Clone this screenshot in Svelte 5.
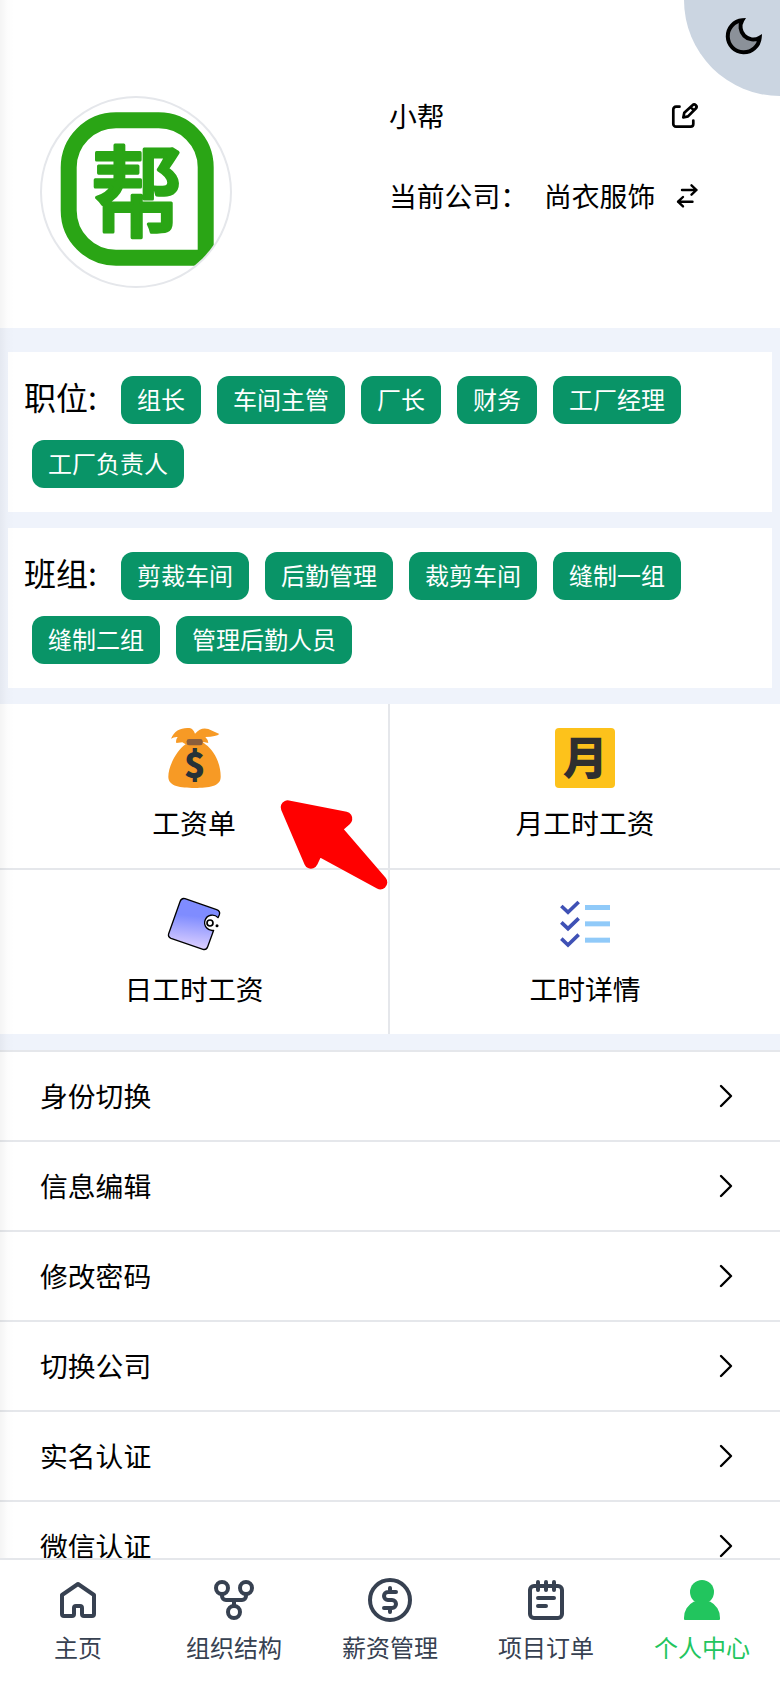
<script>
	const tagGroups = [
		{ label: '职位:', tags: ['组长', '车间主管', '厂长', '财务', '工厂经理', '工厂负责人'] },
		{ label: '班组:', tags: ['剪裁车间', '后勤管理', '裁剪车间', '缝制一组', '缝制二组', '管理后勤人员'] }
	];

	const shortcuts = [
		{ icon: 'bag', label: '工资单' },
		{ icon: 'month', label: '月工时工资' },
		{ icon: 'wallet', label: '日工时工资' },
		{ icon: 'checks', label: '工时详情' }
	];

	const menu = ['身份切换', '信息编辑', '修改密码', '切换公司', '实名认证', '微信认证'];

	const tabs = [
		{ icon: 'home', label: '主页' },
		{ icon: 'fork', label: '组织结构' },
		{ icon: 'dollar', label: '薪资管理' },
		{ icon: 'note', label: '项目订单' },
		{ icon: 'user', label: '个人中心' }
	];

	let active = $state('user');
</script>

<div class="app">
	<main>
		<header>
			<div class="avatar">
				<svg viewBox="0 0 192 192">
					<path
						d="M76 24.300h42.700a47 47 0 0 1 47 47V157q0 4.700-4.700 4.700h5.500l-1 0H76a47.300 47.300 0 0 1-47.300-47.300V71.600A47.300 47.300 0 0 1 76 24.300z"
						fill="none" stroke="#2aa515" stroke-width="16" />
					<text class="logo-text" transform="translate(97 132.500) scale(1 1.070)" text-anchor="middle">帮</text>
				</svg>
			</div>
			<div class="info">
				<div class="line">
					<span>小帮</span>
					<svg class="edit" viewBox="0 0 30 30" width="30" height="30">
						<path d="M9.500 5.700H6a2.700 2.700 0 0 0-2.700 2.700V23A2.700 2.700 0 0 0 6 25.700h14.600a2.700 2.700 0 0 0 2.700-2.700v-3.500" />
						<path d="M13.300 16.500l1-4.700 8.200-7.600a2.300 2.300 0 0 1 3.300 3.300l-7.800 7.900zM20.600 6l3.400 3.400" />
					</svg>
				</div>
				<div class="line">
					<span>当前公司：</span>
					<span class="company">尚衣服饰</span>
					<svg class="swap" viewBox="0 0 24 26" width="24" height="26">
						<path d="M7 7h14.500M16.500 2.300l5 4.700-5 4.700M17.500 18.700H3M8 14L3 18.700l5 4.700" />
					</svg>
				</div>
			</div>
			<button class="theme" aria-label="theme">
				<svg viewBox="0 0 36 36" width="36" height="36">
					<path d="M16.300 2.300A16 16 0 1 0 33.700 19.700A12.700 12.700 0 0 1 16.300 2.300z" />
				</svg>
			</button>
		</header>

		<section class="groups">
			{#each tagGroups as group}
				<div class="group">
					<span class="group-label">{group.label}</span>
					{#each group.tags as tag}
						<span class="tag">{tag}</span>
					{/each}
				</div>
			{/each}
		</section>

		<section class="grid">
			{#each shortcuts as item}
				<div class="cell">
					{#if item.icon === 'bag'}
						<svg viewBox="132 84 180 180" width="60" height="60">
							<path fill="#f79a25" d="M153 116C163 92 183 82 208 84q12 2 17 17 18-21 40-14l33 15q-8 8-42 9 7 6 9 18l-18-4 9 8c31 22 47 65 46 99-1 28-35 32-78 32s-77-4-79-32c-1-32 25-81 52-99l-10-6-18 2q-3-9 4-18-11-1-20 5z" />
							<rect x="200" y="117" width="48" height="19" rx="7" fill="#8b5e3c" />
							<text class="bag-text" x="224" y="235" text-anchor="middle">$</text>
						</svg>
					{:else if item.icon === 'month'}
						<svg viewBox="0 0 60 60" width="60" height="60">
							<rect width="60" height="60" rx="4" fill="#fdc21b" />
							<text class="month-text" x="30.200" y="46.800" text-anchor="middle">月</text>
						</svg>
					{:else if item.icon === 'wallet'}
						<svg viewBox="192 72 180 180" width="60" height="60">
							<defs>
								<linearGradient id="wallet" x1="0.600" y1="0" x2="0.500" y2="1">
									<stop offset="0.350" stop-color="#7f8cff" />
									<stop offset="1" stop-color="#e0d2ff" />
								</linearGradient>
							</defs>
							<path
								d="M255 86L350 119Q362 124 358 134L354 143A23 23 0 1 0 341 181L323 230Q319 241 309 238L213 205Q203 201 206 191L240 95Q244 83 255 86Z"
								fill="url(#wallet)" stroke="#000" stroke-width="4" stroke-linejoin="round" />
							<circle cx="330" cy="159" r="9" fill="#fff" stroke="#000" stroke-width="5" />
							<circle cx="351" cy="167" r="4.500" />
						</svg>
					{:else}
						<svg viewBox="225 582 180 180" width="60" height="60">
							{#each [0, 49, 98] as dy}
								<path d="M244 {618 + dy}l20 19 32-31" fill="none" stroke="#3f51b5" stroke-width="11" />
								<path d="M315 {622.5 + dy}h75" stroke="#90caf9" stroke-width="15" />
							{/each}
						</svg>
					{/if}
					<span>{item.label}</span>
				</div>
			{/each}
		</section>

		<ul class="menu">
			{#each menu as item}
				<li>
					<span>{item}</span>
					<svg viewBox="0 0 16 24" width="16" height="24">
						<path d="M3 2l10 10L3 22" />
					</svg>
				</li>
			{/each}
		</ul>
	</main>

	<nav>
		{#each tabs as tab}
			<button class:active={active === tab.icon} onclick={() => (active = tab.icon)}>
				<svg viewBox="0 0 24 24" width="48" height="48">
					{#if tab.icon === 'home'}
						<path d="M5 20a1 1 0 0 1-1-1V9.500L12 4l8 5.500V19a1 1 0 0 1-1 1h-4a1 1 0 0 1-1-1v-3a1 1 0 0 0-1-1h-2a1 1 0 0 0-1 1v3a1 1 0 0 1-1 1z" />
					{:else if tab.icon === 'fork'}
						<circle cx="6" cy="6" r="3" />
						<circle cx="18" cy="6" r="3" />
						<circle cx="12" cy="18" r="3" />
						<path d="M6 9v1a2 2 0 0 0 2 2h8a2 2 0 0 0 2-2V9M12 12v3" />
					{:else if tab.icon === 'dollar'}
						<circle cx="12" cy="12" r="10" />
						<path d="M15 8h-4a2 2 0 0 0 0 4h2a2 2 0 0 1 0 4H9M12 6v2M12 16v2" />
					{:else if tab.icon === 'note'}
						<path d="M6 5h12a2 2 0 0 1 2 2v12a2 2 0 0 1-2 2H6a2 2 0 0 1-2-2V7a2 2 0 0 1 2-2zM8 3v4M12 3v4M16 3v4M8 11h8M8 15h4" />
					{:else}
						<g class="solid">
							<circle cx="12" cy="8" r="6" />
							<path d="M8 12.700A9 9 0 0 0 3 21v.500q0 .500.500.500h17q.500 0 .500-.500V21a9 9 0 0 0-5-8.300z" />
						</g>
					{/if}
				</svg>
				<span>{tab.label}</span>
			</button>
		{/each}
	</nav>

	<div class="edge"></div>
	<svg class="pointer" viewBox="480 300 324 270" width="108" height="90">
		<path d="M503 322L676 356L642 386L781 547L592 444L573 485Z" />
	</svg>
</div>

<style>
:global(body) {
  margin: 0;
  background: #fff;
}

.app {
  position: relative;
  display: flex;
  flex-direction: column;
  height: 1688px;
  overflow: hidden;
  background: #eff3fb;
  color: #000;
  font-family: "Noto Sans CJK SC", sans-serif;
  font-size: 27.800px;
}

svg {
  display: block;
  flex: none;
  overflow: visible;
}

button {
  border: 0;
  padding: 0;
  background: none;
  font: inherit;
  color: inherit;
}

main {
  flex: 1;
  min-height: 0;
  overflow: hidden;
}

header {
  position: relative;
  display: flex;
  box-sizing: border-box;
  height: 328px;
  padding: 96px 80px 0 40px;
  background: #fff;
}

.avatar {
  box-sizing: border-box;
  width: 192px;
  height: 192px;
  border: 2px solid #e5e7eb;
  border-radius: 50%;
  overflow: hidden;
}

.avatar svg {
  width: 192px;
  height: 192px;
  margin: -2px;
}

.logo-text {
  font-size: 92px;
  font-weight: 500;
  fill: #2aa515;
  stroke: #2aa515;
  stroke-width: 3px;
  stroke-linejoin: round;
}

.info {
  flex: 1;
  margin-left: 157px;
}

.line {
  display: flex;
  align-items: center;
  height: 40px;
  margin-bottom: 40px;
}

.line span {
  padding-bottom: 3px;
}

.line svg {
  margin-left: auto;
  fill: none;
  stroke: #000;
  stroke-width: 2.700;
  stroke-linecap: round;
  stroke-linejoin: round;
}

.line .company {
  margin-left: 16px;
}

.line .swap {
  margin-right: 1px;
  stroke-width: 2.400;
}

.theme {
  position: absolute;
  top: 0;
  right: 0;
  width: 96px;
  height: 96px;
  padding: 18px 18px 42px 42px;
  border-bottom-left-radius: 100%;
  background: #cbd5e1;
}

.theme path {
  fill: #8b9199;
  stroke: #000;
  stroke-width: 4;
}

.groups {
  display: flex;
  flex-direction: column;
  gap: 16px;
  padding: 24px 8px 16px;
}

.group {
  display: flex;
  flex-wrap: wrap;
  padding: 16px;
  background: #fff;
}

.group-label {
  width: 73px;
  margin-right: 16px;
  font-size: 32px;
  line-height: 57px;
}

.tag {
  box-sizing: border-box;
  height: 48px;
  margin: 8px;
  padding: 0 16px;
  border-radius: 12px;
  background: #099467;
  color: #fff;
  font-size: 24px;
  line-height: 46px;
}

.grid {
  display: grid;
  grid-template-columns: 390px 390px;
  background: #fff;
}

.cell {
  display: flex;
  flex-direction: column;
  align-items: center;
  gap: 14px;
  height: 116px;
  padding: 24px 0;
  line-height: 40px;
}

.cell:nth-child(odd) {
  border-right: 2px solid #e5e7eb;
}

.cell:nth-child(-n + 2) {
  border-bottom: 2px solid #e5e7eb;
}

.bag-text {
  font-size: 106px;
  font-weight: 900;
  fill: #263238;
}

.month-text {
  font-size: 45px;
  font-weight: 900;
  fill: #2f2f2f;
}

.menu {
  margin: 16px 0 0;
  padding: 0;
  list-style: none;
  background: #fff;
}

.menu li {
  display: flex;
  align-items: center;
  justify-content: space-between;
  height: 88px;
  padding: 0 46px 0 40px;
  border-top: 2px solid #e5e7eb;
}

.menu span {
  padding-bottom: 3px;
}

.menu path {
  fill: none;
  stroke: #000;
  stroke-width: 2.400;
  stroke-linecap: round;
  stroke-linejoin: round;
}

nav {
  display: grid;
  grid-template-columns: repeat(5, 1fr);
  box-sizing: border-box;
  height: 130px;
  padding-top: 16px;
  border-top: 2px solid #e5e7eb;
  background: #fff;
  color: #374151;
  font-size: 24px;
  line-height: 32px;
}

nav button {
  display: flex;
  flex-direction: column;
  align-items: center;
  gap: 7px;
}

nav svg {
  fill: none;
  stroke: currentColor;
  stroke-width: 2;
  stroke-linecap: round;
  stroke-linejoin: round;
}

nav .solid {
  fill: currentColor;
  stroke: none;
}

nav .active {
  color: #22c55e;
}

.edge {
  position: absolute;
  top: 0;
  left: 0;
  width: 14px;
  height: 1558px;
  background: linear-gradient(to right, rgba(0, 0, 0, 0.045), rgba(0, 0, 0, 0.012) 50%, transparent);
}

.pointer {
  position: absolute;
  top: 800px;
  left: 280px;
  fill: #f00;
  stroke: #f00;
  stroke-width: 42;
  stroke-linejoin: round;
}
</style>
